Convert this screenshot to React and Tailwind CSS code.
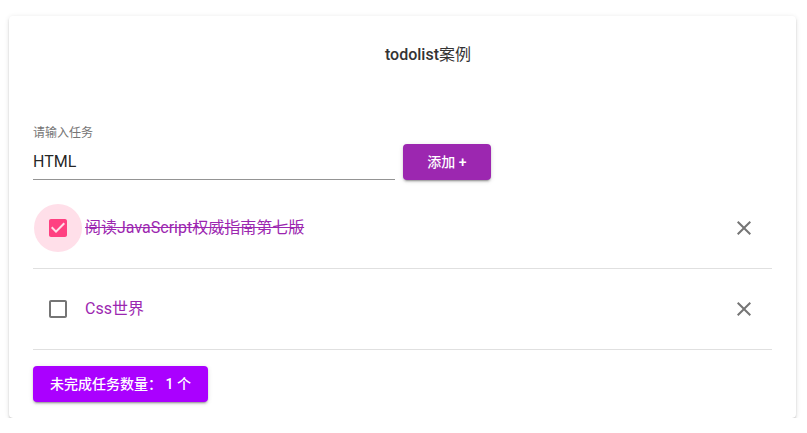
import { useState } from "react";

const font = { fontFamily: 'Roboto, "Noto Sans CJK SC", sans-serif' };

function CloseIcon() {
  return (
    <svg viewBox="0 0 24 24" className="w-6 h-6" fill="#757575">
      <path d="M19 6.41L17.59 5 12 10.59 6.41 5 5 6.41 10.59 12 5 17.59 6.41 19 12 13.41 17.59 19 19 17.59 13.41 12z" />
    </svg>
  );
}

function Check({ checked }) {
  return (
    <div className={"w-12 h-12 ml-px flex items-center justify-center rounded-full " + (checked ? "bg-[#ffdfe9]" : "")}>
      {checked ? (
        <svg viewBox="0 0 24 24" className="w-6 h-6">
          <path fill="#ff4081" d="M19 3H5c-1.11 0-2 .9-2 2v14c0 1.1.89 2 2 2h14c1.11 0 2-.9 2-2V5c0-1.1-.89-2-2-2zm-9 14l-5-5 1.41-1.41L10 14.17l7.59-7.59L19 8l-9 9z" />
        </svg>
      ) : (
        <svg viewBox="0 0 24 24" className="w-6 h-6">
          <path fill="#757575" d="M19 5v14H5V5h14m0-2H5c-1.1 0-2 .9-2 2v14c0 1.1.9 2 2 2h14c1.1 0 2-.9 2-2V5c0-1.1-.9-2-2-2z" />
        </svg>
      )}
    </div>
  );
}

export default function App() {
  const [text, setText] = useState("HTML");
  const [todos] = useState([
    { id: 1, title: "阅读JavaScript权威指南第七版", done: true },
    { id: 2, title: "Css世界", done: false },
  ]);
  const left = todos.filter((t) => !t.done).length;

  return (
    <div className="pt-4 pl-[9px]" style={font}>
      <div className="w-[787px] bg-white rounded shadow-[0_3px_1px_-2px_rgba(0,0,0,0.2),0_2px_2px_0_rgba(0,0,0,0.14),0_1px_5px_0_rgba(0,0,0,0.12)] px-6 pt-6 pb-4">
        <div className="h-[30px] leading-[30px] text-center pl-[51px] text-[16px] font-medium text-[#333]">
          todolist<span className="font-normal">案例</span>
        </div>
        <div className="mt-[55px] flex items-end">
          <div className="w-[362px]">
            <div className="text-[12px] leading-4 text-[#757575]">请输入任务</div>
            <input
              value={text}
              onChange={(e) => setText(e.target.value)}
              className="w-full h-[39px] pt-[2px] text-[16px] text-[rgba(0,0,0,0.87)] border-b border-[#949494] outline-none bg-transparent"
            />
          </div>
          <button className="ml-2 w-[88px] h-9 rounded bg-[#9c27b0] text-white text-[14px] font-medium shadow-[0_3px_1px_-2px_rgba(0,0,0,0.2),0_2px_2px_0_rgba(0,0,0,0.14),0_1px_5px_0_rgba(0,0,0,0.12)]">
            添加 +
          </button>
        </div>
        <ul className="mt-2">
          {todos.map((t) => (
            <li key={t.id} className="h-[81px] flex items-center border-b border-[#e0e0e0]">
              <Check checked={t.done} />
              <span className={"ml-[3px] flex-1 text-[16px] text-[#9c27b0] " + (t.done ? "line-through" : "")}>{t.title}</span>
              <span className="mr-4"><CloseIcon /></span>
            </li>
          ))}
        </ul>
        <button className="mt-4 h-9 w-[175px] rounded bg-[#aa00ff] text-white text-[14px] font-medium shadow-[0_3px_1px_-2px_rgba(0,0,0,0.2),0_2px_2px_0_rgba(0,0,0,0.14),0_1px_5px_0_rgba(0,0,0,0.12)]">
          未完成任务数量： {left} 个
        </button>
      </div>
    </div>
  );
}
